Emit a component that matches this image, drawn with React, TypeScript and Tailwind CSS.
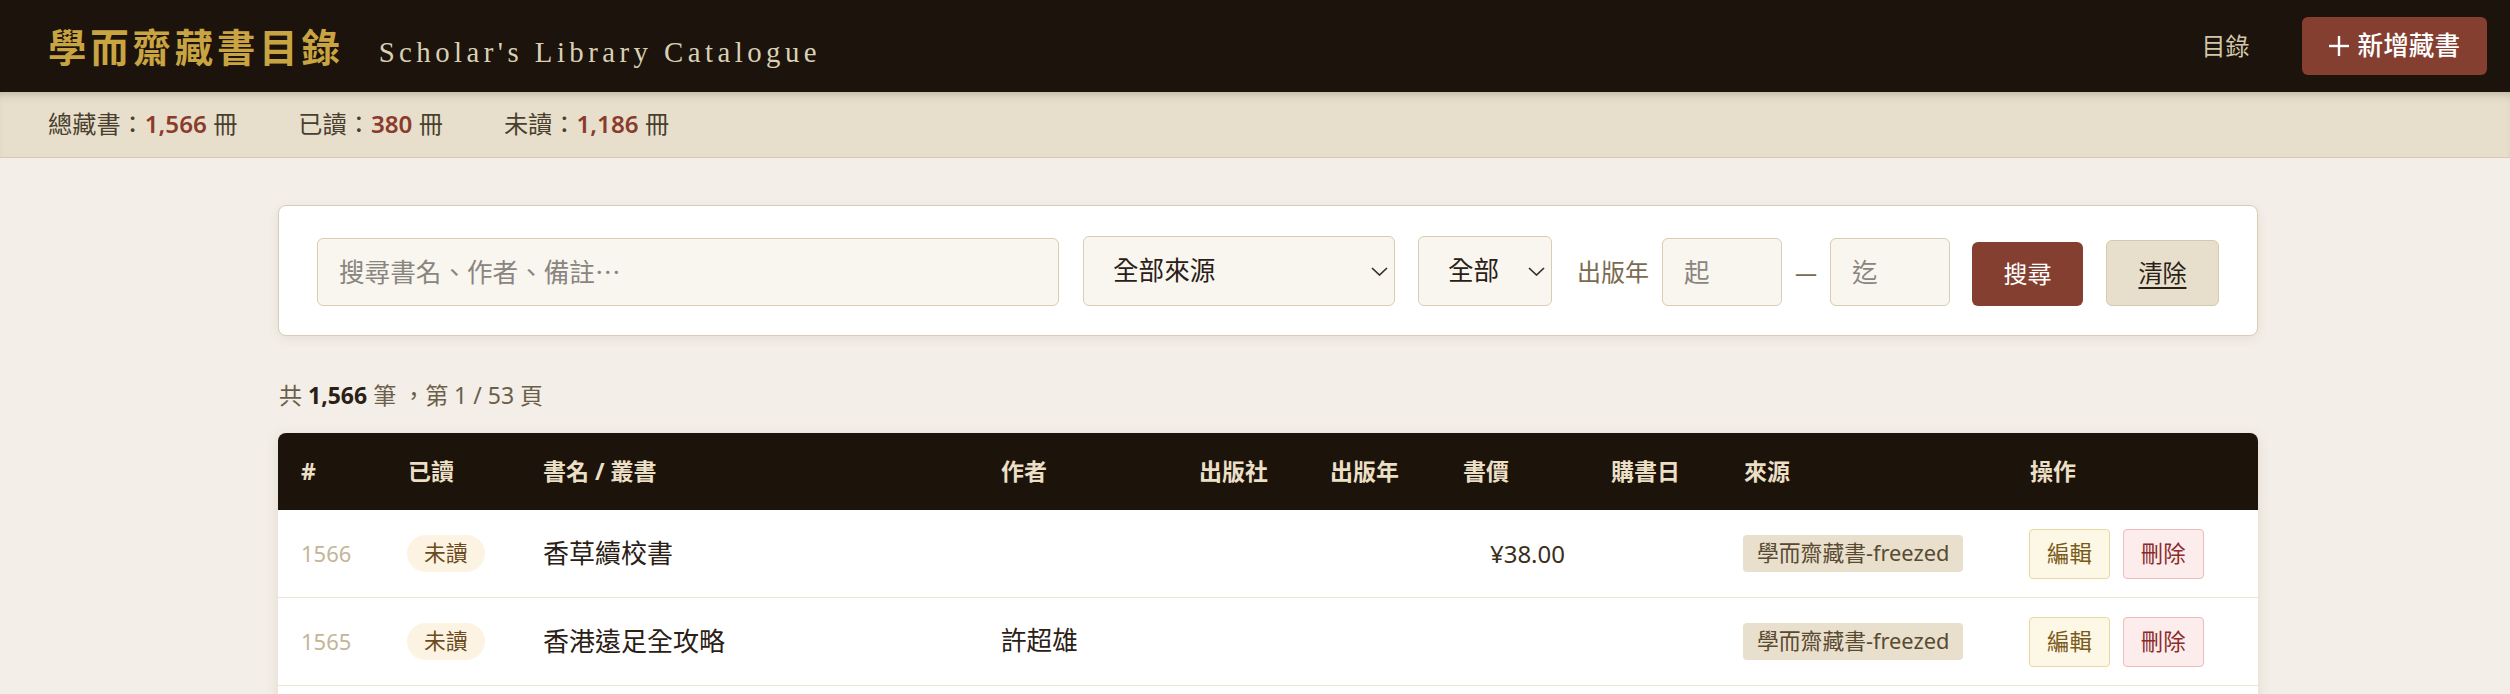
interface Book {
  id: number;
  title: string;
  author: string;
  publisher: string;
  year: string;
  price: string;
  bought: string;
  source: string;
}

const books: Book[] = [
  { id: 1566, title: '香草續校書', author: '', publisher: '', year: '', price: '¥38.00', bought: '', source: '學而齋藏書-freezed' },
  { id: 1565, title: '香港遠足全攻略', author: '許超雄', publisher: '', year: '', price: '', bought: '', source: '學而齋藏書-freezed' },
  { id: 1564, title: '中國古典文學讀本', author: '', publisher: '', year: '', price: '', bought: '', source: '學而齋藏書-freezed' },
  { id: 1563, title: '說文解字注', author: '段玉裁', publisher: '', year: '', price: '', bought: '', source: '學而齋藏書-freezed' },
];

const cols = 'grid grid-cols-[107px_135px_458px_198px_131px_133px_148px_133px_286px_251px]';

function Select({ label, width }: { label: string; width: string }) {
  return (
    <div className={`relative shrink-0 h-[70px] ${width}`}>
      <select className="appearance-none w-full h-full bg-[#f9f6f0] border border-[#d8cdb4] rounded-[6px] pl-[29px] text-[25.6px] text-[#2a2016] outline-none">
        <option>{label}</option>
      </select>
      <svg className="absolute right-[7px] top-[31px] pointer-events-none text-[#3a3028]" width="17" height="9" viewBox="0 0 17 9" fill="none" stroke="currentColor" strokeWidth="1.7">
        <polyline points="1,1 8.5,8 16,1" />
      </svg>
    </div>
  );
}

export default function App() {
  return (
    <div className="min-h-screen bg-[#f3eee7] font-['Noto_Sans','Noto_Sans_CJK_TC',sans-serif]">
      <header className="h-[92px] bg-[#1b130c] flex items-center justify-between pl-[48px] pr-[23px]">
        <div className="flex items-baseline gap-[35px]">
          <h1 className="font-['Noto_Sans_CJK_TC',sans-serif] text-[38.4px] tracking-[0.1em] font-bold text-[#c9a442] leading-none">學而齋藏書目錄</h1>
          <span className="font-['Liberation_Serif',serif] text-[28.8px] tracking-[0.155em] text-[#d9cfb3] leading-none">Scholar's Library Catalogue</span>
        </div>
        <nav className="flex items-center gap-[52px]">
          <a className="text-[24px] text-[#d2c7a8] leading-none">目錄</a>
          <button className="h-[58px] px-[27px] rounded-[6px] bg-[#843f31] text-white text-[25.6px] font-medium flex items-center gap-[9px]">
            <svg width="20" height="20" viewBox="0 0 20 20" stroke="currentColor" strokeWidth="2.4">
              <line x1="10" y1="0" x2="10" y2="20" />
              <line x1="0" y1="10" x2="20" y2="10" />
            </svg>
            新增藏書
          </button>
        </nav>
      </header>

      <div className="h-[66px] bg-[#e7dfcc] border-b border-[#d4cab4] shadow-[inset_0_8px_10px_-6px_rgba(60,45,20,0.25)] px-[48px] flex items-center gap-[61px] text-[24.2px] text-[#4a3f2f]">
        <span>總藏書：<b className="font-semibold text-[#8a3b2c]">1,566</b> 冊</span>
        <span>已讀：<b className="font-semibold text-[#8a3b2c]">380</b> 冊</span>
        <span>未讀：<b className="font-semibold text-[#8a3b2c]">1,186</b> 冊</span>
      </div>

      <main className="ml-[278px] w-[1980px] pt-[47px] pb-[60px]">
        <div className="h-[131px] bg-white border border-[#d9ceb3] rounded-[8px] shadow-[0_3px_12px_rgba(80,60,30,0.08)] px-[38px] pb-[29px] flex items-end gap-[24px]">
          <input
            className="flex-1 min-w-0 h-[68px] bg-[#f9f6f0] border border-[#d8cdb4] rounded-[6px] px-[21px] text-[25.6px] text-[#2a2016] placeholder:text-[#8a8580] outline-none"
            placeholder="搜尋書名、作者、備註⋯"
          />
          <Select label="全部來源" width="w-[312px]" />
          <Select label="全部" width="w-[134px] -ml-[1px]" />
          <div className="shrink-0 flex items-center gap-[13px] ml-[1px]">
            <span className="text-[24px] text-[#7a6b50]">出版年</span>
            <input className="w-[120px] h-[68px] bg-[#f9f6f0] border border-[#d8cdb4] rounded-[6px] px-[21px] text-[25.6px] placeholder:text-[#8a8580] outline-none" placeholder="起" />
            <span className="text-[22px] text-[#7a6b50]">—</span>
            <input className="w-[120px] h-[68px] bg-[#f9f6f0] border border-[#d8cdb4] rounded-[6px] px-[21px] text-[25.6px] placeholder:text-[#8a8580] outline-none" placeholder="迄" />
          </div>
          <button className="shrink-0 w-[111px] h-[64px] -ml-[2px] rounded-[6px] bg-[#843f31] text-white text-[24px]">搜尋</button>
          <button className="shrink-0 w-[113px] h-[66px] -ml-[1px] rounded-[6px] bg-[#e7dfcc] border border-[#d4cab0] text-[#2a2016] text-[24px] underline underline-offset-[5px]">清除</button>
        </div>

        <p className="mt-[41px] leading-[36px] text-[23px] text-[#6b5e4a] pl-[1px]">
          共 <b className="font-bold text-[#2a2016]">1,566</b> 筆 ，第 1 / 53 頁
        </p>

        <div className="mt-[20px] bg-white rounded-[8px] overflow-hidden shadow-[0_3px_14px_rgba(80,60,30,0.1)]">
          <div className={`${cols} h-[77px] items-center bg-[#1c130b] text-[#ebdfc5] text-[23px] font-bold`}>
            {['#', '已讀', '書名 / 叢書', '作者', '出版社', '出版年', '書價', '購書日', '來源', '操作'].map((h) => (
              <div key={h} className="pl-[23px]">{h}</div>
            ))}
          </div>
          {books.map((b) => (
            <div key={b.id} className={`${cols} h-[88px] items-center border-b border-[#ede4d1]`}>
              <div className="pl-[23px] text-[22px] text-[#c4b597]">{b.id}</div>
              <div className="pl-[22px]">
                <span className="inline-flex items-center h-[37px] px-[17px] rounded-full bg-[#fcf3e2] text-[#6b4b1c] text-[21.8px]">未讀</span>
              </div>
              <div className="pl-[23px] text-[26px] text-[#2a2016]">{b.title}</div>
              <div className="pl-[23px] text-[25.6px] text-[#2a2016]">{b.author}</div>
              <div className="pl-[23px]">{b.publisher}</div>
              <div className="pl-[23px]">{b.year}</div>
              <div className="pr-[23px] text-right text-[24px] text-[#3a2e20]">{b.price}</div>
              <div className="pl-[23px]">{b.bought}</div>
              <div className="pl-[22px]">
                <span className="inline-flex items-center h-[37px] px-[14px] rounded-[4px] bg-[#e8dfcc] text-[#5a4a32] text-[21.8px]">{b.source}</span>
              </div>
              <div className="pl-[22px] flex items-center gap-[13px]">
                <button className="h-[50px] px-[17px] rounded-[4px] border border-[#e8d7a0] bg-[#fdf8e6] text-[#7a5a1a] text-[22.4px]">編輯</button>
                <button className="h-[50px] px-[17px] rounded-[4px] border border-[#ecbcbc] bg-[#fcecec] text-[#8b2a2a] text-[22.4px]">刪除</button>
              </div>
            </div>
          ))}
        </div>
      </main>
    </div>
  );
}
